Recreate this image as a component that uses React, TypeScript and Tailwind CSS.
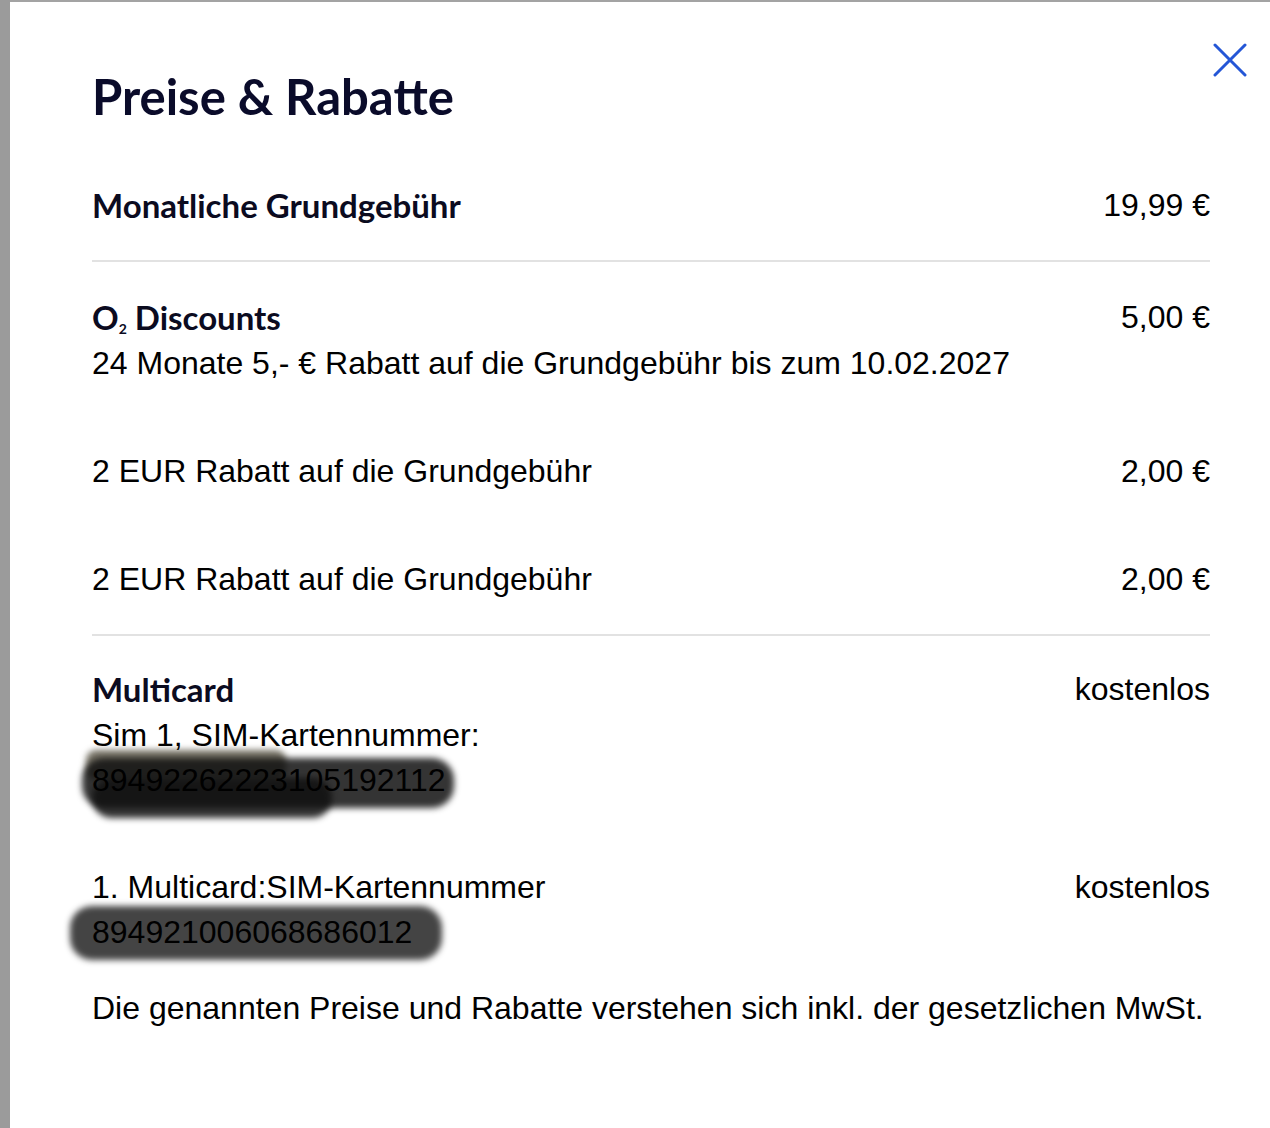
import React from "react";

const body = "font-['Liberation_Sans',Arial,sans-serif] text-[32px] leading-[46px] text-black";
const label = "font-['Lato','Noto_Sans',sans-serif] font-bold text-[33px] leading-[46px] text-[#0b0b1f]";

// brush-like blackout over the SIM numbers
const Redacted: React.FC<{ text: string; first?: boolean }> = ({ text, first }) => (
	<div className="relative">
		<span className={`relative z-10 font-['Liberation_Sans',Arial,sans-serif] text-[32px] leading-[44px] text-black`}>
			{text}
		</span>
		{first ? (
			<>
				<div className="absolute left-[-6px] top-[-8px] h-[30px] w-[200px] rounded-[10px] bg-[#3a3422]/70 blur-[3px]" />
				<div className="absolute left-[-10px] top-[0px] h-[50px] w-[372px] rounded-[22px] bg-[#111]/85 blur-[3px]" />
				<div className="absolute left-[0px] top-[20px] h-[40px] w-[240px] rounded-[20px] bg-[#111]/85 blur-[3px]" />
			</>
		) : (
			<div className="absolute left-[-22px] top-[-4px] h-[54px] w-[372px] rounded-[22px] bg-[#151515]/80 blur-[3px]" />
		)}
	</div>
);

const Row: React.FC<{ left: React.ReactNode; right: string; className?: string }> = ({
	left,
	right,
	className = "",
}) => (
	<div className={`flex items-start justify-between ${className}`}>
		<div>{left}</div>
		<div className={`${body} text-right`}>{right}</div>
	</div>
);

export default function App() {
	return (
		<div className="flex min-h-[1128px] w-full bg-white">
			<div className="w-[10px] shrink-0 bg-[#9b9b9b]" />
			<div className="relative flex-1 border-t-2 border-[#a3a3a3] pl-[82px] pr-[60px]">
				<button className="absolute right-[23px] top-[41px] text-[#2456d6]" aria-label="Schließen">
					<svg width="34" height="34" viewBox="0 0 34 34" fill="none" stroke="currentColor" strokeWidth="3" strokeLinecap="round">
						<path d="M2 2L32 32M32 2L2 32" />
					</svg>
				</button>

				<h1 className="mt-[66px] font-['Lato','Noto_Sans',sans-serif] text-[49px] font-bold leading-[56px] text-[#0a0b2a]">
					Preise &amp; Rabatte
				</h1>

				<div className="mt-[58px] pb-[32px]">
					<Row left={<span className={label}>Monatliche Grundgebühr</span>} right="19,99 €" />
				</div>

				<div className="h-[2px] bg-[#e2e2e2]" />

				<div className="py-[32px]">
					<Row
						left={
							<div>
								<div className={label}>
									O<sub className="text-[14px]">2</sub> Discounts
								</div>
								<div className={body}>24 Monate 5,- € Rabatt auf die Grundgebühr bis zum 10.02.2027</div>
							</div>
						}
						right="5,00 €"
					/>
					<Row className="mt-[62px]" left={<span className={body}>2 EUR Rabatt auf die Grundgebühr</span>} right="2,00 €" />
					<Row className="mt-[62px]" left={<span className={body}>2 EUR Rabatt auf die Grundgebühr</span>} right="2,00 €" />
				</div>

				<div className="h-[2px] bg-[#e2e2e2]" />

				<div className="pt-[30px]">
					<Row
						left={
							<div>
								<div className={label}>Multicard</div>
								<div className={body}>Sim 1, SIM-Kartennummer:</div>
								<Redacted text="89492262223105192112" first />
							</div>
						}
						right="kostenlos"
					/>
					<Row
						className="mt-[62px]"
						left={
							<div>
								<div className={body}>1. Multicard:SIM-Kartennummer</div>
								<Redacted text="894921006068686012" />
							</div>
						}
						right="kostenlos"
					/>
				</div>

				<p className={`mt-[31px] ${body}`}>
					Die genannten Preise und Rabatte verstehen sich inkl. der gesetzlichen MwSt.
				</p>
			</div>
		</div>
	);
}
